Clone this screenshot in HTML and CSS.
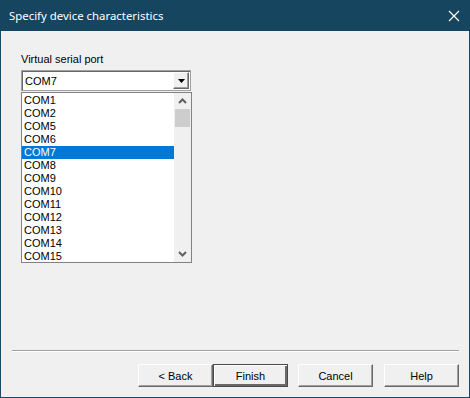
FILE: index.html
```html
<!DOCTYPE html>
<html lang="en">

<head>
    <meta charset="UTF-8">
    <title>Specify device characteristics</title>
    <link rel="stylesheet" href="styles.css">
</head>

<body>
    <div class="window">
        <div class="titlebar">
            <span class="title">Specify device characteristics</span>
            <svg class="close" width="12" height="12" viewBox="0 0 12 12">
                <path d="M1 1 L11 11 M11 1 L1 11" stroke="#fff" stroke-width="1.2" fill="none"/>
            </svg>
        </div>
        <div class="content">
            <div class="label">Virtual serial port</div>
            <div class="combo">
                <span class="combo-text">COM7</span>
                <span class="combo-btn">
                    <svg width="7" height="4" viewBox="0 0 7 4"><path d="M0 0 H7 L3.5 4 Z" fill="#000"/></svg>
                </span>
            </div>
            <div class="list">
                <div class="items">
                    <div class="item">COM1</div>
                    <div class="item">COM2</div>
                    <div class="item">COM5</div>
                    <div class="item">COM6</div>
                    <div class="item selected">COM7</div>
                    <div class="item">COM8</div>
                    <div class="item">COM9</div>
                    <div class="item">COM10</div>
                    <div class="item">COM11</div>
                    <div class="item">COM12</div>
                    <div class="item">COM13</div>
                    <div class="item">COM14</div>
                    <div class="item">COM15</div>
                </div>
                <div class="scrollbar">
                    <span class="arrow">
                        <svg width="9" height="6" viewBox="0 0 9 6"><path d="M1 5 L4.5 1.5 L8 5" stroke="#606060" stroke-width="2" fill="none"/></svg>
                    </span>
                    <span class="thumb"></span>
                    <span class="track"></span>
                    <span class="arrow">
                        <svg width="9" height="6" viewBox="0 0 9 6"><path d="M1 1 L4.5 4.5 L8 1" stroke="#606060" stroke-width="2" fill="none"/></svg>
                    </span>
                </div>
            </div>
        </div>
        <div class="separator"></div>
        <div class="buttons">
            <button class="btn">&lt; Back</button>
            <button class="btn default">Finish</button>
            <button class="btn gap">Cancel</button>
            <button class="btn gap2">Help</button>
        </div>
    </div>
</body>

</html>
```

FILE: styles.css
```css
* {
    padding: 0;
    margin: 0;
    box-sizing: border-box;
}
body {
    background: #f0f0f0;
    font-family: "Liberation Sans", Arial, sans-serif;
    font-size: 11px;
    color: #000;
}
.window {
    width: 470px;
    height: 398px;
    display: flex;
    flex-direction: column;
    background: #f0f0f0;
    border: 1px solid #1b4b68;
    border-top: none;
}
.titlebar {
    height: 31px;
    margin: 0 -1px;
    background: #16455f;
    display: flex;
    align-items: center;
    justify-content: space-between;
    padding: 0 10px 0 9px;
}
.title {
    color: #fff;
    font-family: "Noto Sans", "Open Sans", sans-serif;
    font-size: 11.4px;
}
.close {
    display: block;
}
.content {
    flex: 1;
    padding: 22px 0 0 20px;
}
.label {
    line-height: 13px;
    margin-bottom: 4px;
}
.combo {
    width: 170px;
    height: 21px;
    background: #fff;
    border: 1px solid #a0a0a0;
    box-shadow: inset 1px 1px #696969;
    display: flex;
    align-items: center;
    justify-content: space-between;
    padding: 1px 1px 1px 3px;
}
.combo-btn {
    width: 16px;
    height: 17px;
    background: #f0f0f0;
    border: 1px solid;
    border-color: #fff #696969 #696969 #fff;
    box-shadow: inset -1px -1px #a0a0a0;
    display: flex;
    align-items: center;
    justify-content: center;
}
.combo-btn svg {
    display: block;
}
.list {
    width: 171px;
    height: 171px;
    margin-top: 1px;
    background: #fff;
    border: 1px solid #828282;
    display: flex;
    overflow: hidden;
}
.items {
    flex: 1;
    padding-top: 1px;
}
.item {
    height: 13px;
    line-height: 13px;
    padding-left: 2px;
}
.item.selected {
    background: #0078d7;
    color: #fff;
}
.scrollbar {
    width: 17px;
    background: #f0f0f0;
    display: flex;
    flex-direction: column;
}
.arrow {
    height: 16px;
    display: flex;
    align-items: center;
    justify-content: center;
}
.arrow svg {
    display: block;
}
.thumb {
    height: 18px;
    margin: 0 1px;
    background: #cdcdcd;
}
.track {
    flex: 1;
}
.separator {
    margin: 0 10px 0 11px;
    border-top: 1px solid #a0a0a0;
    border-bottom: 1px solid #fff;
}
.buttons {
    display: flex;
    justify-content: flex-end;
    padding: 12px 10px 10px 0;
}
.btn {
    width: 75px;
    height: 23px;
    background: #f0f0f0;
    font-family: "Liberation Sans", Arial, sans-serif;
    font-size: 11px;
    color: #000;
    border: 1px solid;
    border-color: #fff #696969 #696969 #fff;
    box-shadow: inset -1px -1px #a0a0a0;
}
.btn.default {
    border: 1px solid #4a4a4a;
    box-shadow: inset 1px 1px #fff, inset -2px -2px #696969, inset -1px -1px #a0a0a0;
}
.btn.gap {
    margin-left: 10px;
}
.btn.gap2 {
    margin-left: 11px;
}
```
